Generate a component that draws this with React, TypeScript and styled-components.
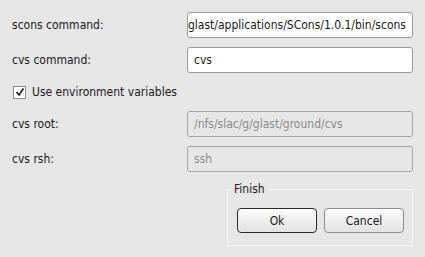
import styled, { createGlobalStyle } from 'styled-components';

const GlobalStyle = createGlobalStyle`
  html, body {
    margin: 0;
    padding: 0;
    background: #e6e6e6;
  }
  body {
    font-family: 'DejaVu Sans Condensed', 'DejaVu Sans', 'Liberation Sans', sans-serif;
    font-size: 12px;
    color: #1a1a1a;
  }
`;

const Dialog = styled.div`
  width: 425px;
  height: 257px;
  box-sizing: border-box;
  padding: 12px 12px 0 12px;
  background: #e6e6e6;
  display: flex;
  flex-direction: column;
`;

const Form = styled.div`
  display: grid;
  grid-template-columns: 175px 226px;
  row-gap: 9px;
  align-items: center;
`;

const Label = styled.span`
  font-size: 12px;
  color: #1a1a1a;
`;

const Field = styled.div<{ disabled?: boolean }>`
  height: 26px;
  box-sizing: border-box;
  border: 1px solid ${(p) => (p.disabled ? '#a4a4a4' : '#9a9a9a')};
  border-radius: 3px;
  background: ${(p) => (p.disabled ? '#e6e6e6' : '#ffffff')};
  color: ${(p) => (p.disabled ? '#8a8a8a' : '#1a1a1a')};
  font-size: 12px;
  display: flex;
  align-items: center;
  padding: 0 6px;
  white-space: nowrap;
  overflow: hidden;
`;

const ScrolledField = styled(Field)`
  padding-left: 0;
`;

const CheckRow = styled.label`
  grid-column: 1 / span 2;
  display: flex;
  align-items: center;
  gap: 6px;
  height: 20px;
  padding-left: 1px;
`;

const Box = styled.span`
  width: 13px;
  height: 13px;
  box-sizing: border-box;
  border: 1px solid #8a8a8a;
  background: #ffffff;
  display: flex;
  align-items: center;
  justify-content: center;
`;

const Footer = styled.div`
  display: flex;
  justify-content: flex-end;
  margin-top: 10px;
`;

const Group = styled.fieldset`
  width: 186px;
  height: 64px;
  box-sizing: border-box;
  margin: 0;
  border: 1px solid #f6f6f6;
  padding: 12px 0 0 9px;
  display: flex;
  gap: 7px;
  align-items: flex-start;
`;

const Legend = styled.legend`
  padding: 0 3px;
  margin-left: -6px;
  font-size: 12px;
  color: #1a1a1a;
`;

const Button = styled.button<{ focused?: boolean }>`
  width: 80px;
  height: 25px;
  border-radius: 4px;
  border: 1px solid ${(p) => (p.focused ? '#2a2a2a' : '#8c8c8c')};
  background: linear-gradient(#fbfbfb, #e2e2e2);
  font-family: 'DejaVu Sans Condensed', 'DejaVu Sans', sans-serif;
  font-size: 12px;
  color: #1a1a1a;
  padding: 0;
`;

export default function App() {
  return (
    <>
      <GlobalStyle />
      <Dialog>
        <Form>
          <Label>scons command:</Label>
          <ScrolledField>glast/applications/SCons/1.0.1/bin/scons</ScrolledField>
          <Label>cvs command:</Label>
          <Field>cvs</Field>
          <CheckRow>
            <Box>
              <svg width="10" height="10" viewBox="0 0 10 10">
                <path d="M1.5 5 L4 8 L8.5 1.5" fill="none" stroke="#1a1a1a" strokeWidth="1.6" />
              </svg>
            </Box>
            <Label>Use environment variables</Label>
          </CheckRow>
          <Label>cvs root:</Label>
          <Field disabled>/nfs/slac/g/glast/ground/cvs</Field>
          <Label>cvs rsh:</Label>
          <Field disabled>ssh</Field>
        </Form>
        <Footer>
          <Group>
            <Legend>Finish</Legend>
            <Button focused>Ok</Button>
            <Button>Cancel</Button>
          </Group>
        </Footer>
      </Dialog>
    </>
  );
}
